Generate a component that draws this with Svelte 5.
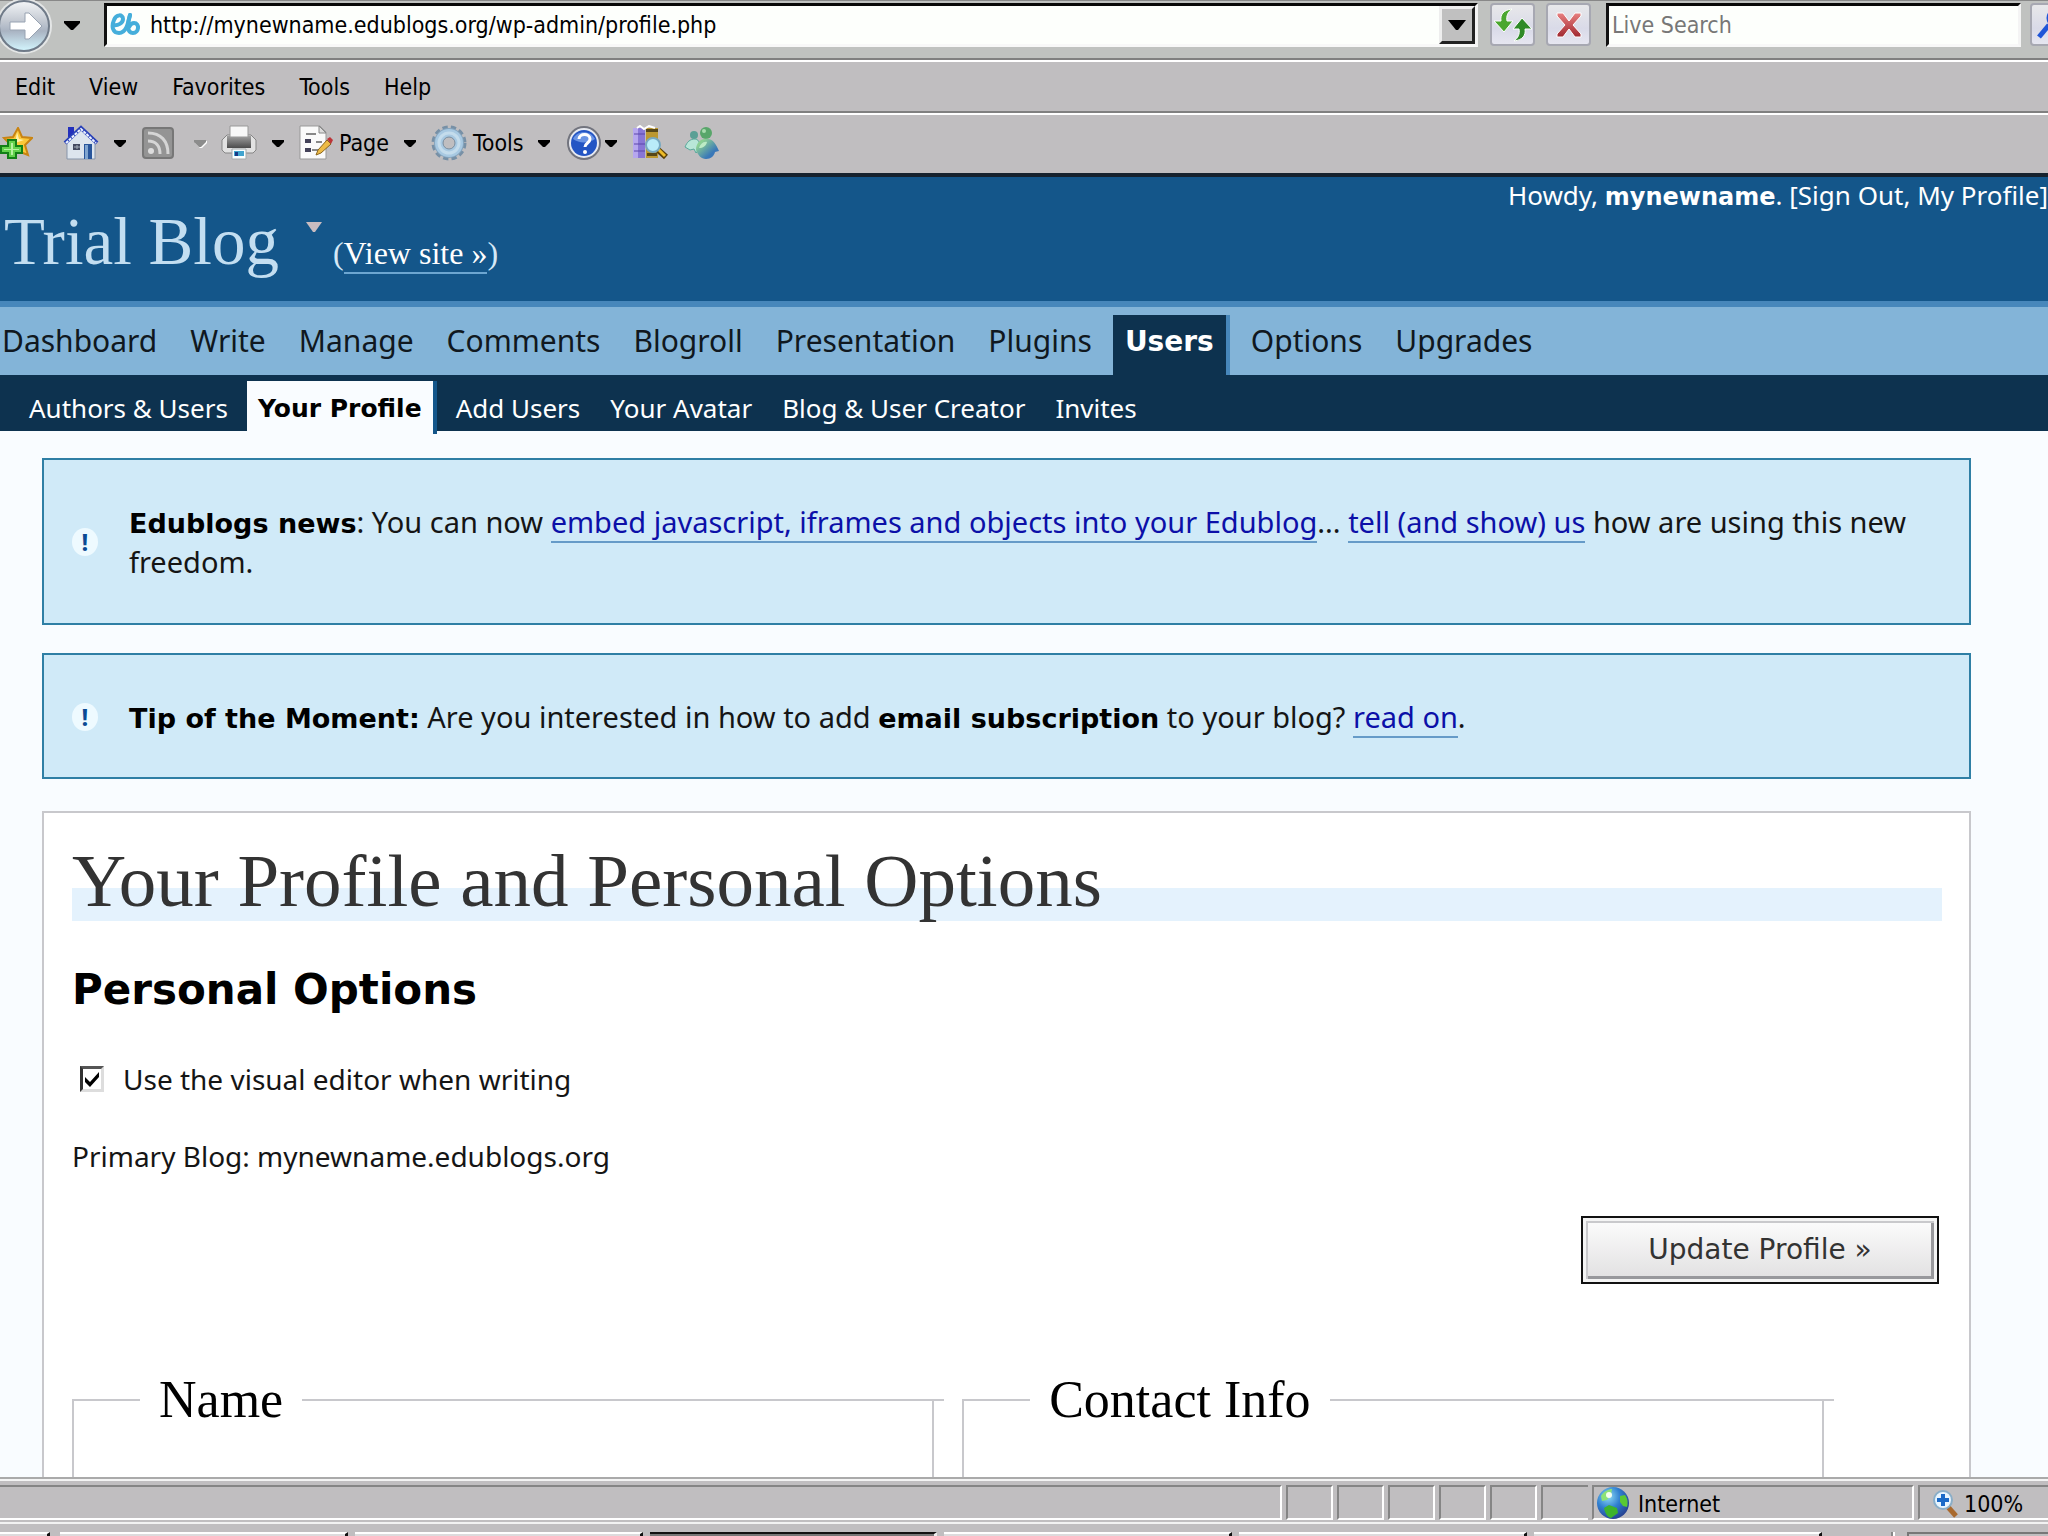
<script>
    const menus = ['Edit', 'View', 'Favorites', 'Tools', 'Help'];
    const sections = ['Dashboard', 'Write', 'Manage', 'Comments', 'Blogroll', 'Presentation', 'Plugins', 'Users', 'Options', 'Upgrades'];
    const pages = ['Authors & Users', 'Your Profile', 'Add Users', 'Your Avatar', 'Blog & User Creator', 'Invites'];
    const statusPanes = [1, 2, 3, 4, 5, 6];
    const tasks = ['first', '', '', 'pressed', '', '', ''];

    let address = $state('http://mynewname.edublogs.org/wp-admin/profile.php');
    let search = $state('');
    let visualEditor = $state(true);
</script>

{#snippet arrow(faded)}
    <svg class="arrow" class:faded width="12" height="7" viewBox="0 0 12 7" aria-hidden="true">
        <path d="M0 0h12v2L7 7H5L0 2z" />
    </svg>
{/snippet}

<div class="browser">
    <div class="address-row">
        <button class="forward" aria-label="Forward">
            <svg width="56" height="56" viewBox="0 0 56 56">
                <defs>
                    <linearGradient id="glass" x1="0" y1="0" x2="0" y2="1">
                        <stop offset="0" stop-color="#f4f6f8" />
                        <stop offset=".4" stop-color="#c3c9d2" />
                        <stop offset=".6" stop-color="#a9b3c2" />
                        <stop offset="1" stop-color="#d4f7ff" />
                    </linearGradient>
                </defs>
                <circle cx="24" cy="28" r="28" fill="#e4e6e6" />
                <circle cx="24" cy="28" r="25" fill="url(#glass)" stroke="#6f7a88" stroke-width="2" />
                <path d="M10 24h15v-9h4l13 13-13 13h-4v-9H10z" fill="#fff" stroke="#98a3b2" stroke-width="1" />
            </svg>
        </button>
        <button class="plain history" aria-label="Recent pages">
            <svg width="16" height="9" viewBox="0 0 16 9"><path d="M0 0h16v2L9 9H7L0 2z" /></svg>
        </button>
        <div class="sunken address">
            <svg width="32" height="28" viewBox="0 0 32 28" fill="none" stroke="#45aedb" stroke-width="4" stroke-linecap="round">
                <path d="M3 14c5 1 10-2 10-6 0-5-7-5-9 1-3 7-1 13 5 13 7 0 9-9 11-18" />
                <path d="M20 4c-3 10-3 18 3 18s7-10 1-10c-3 0-4 2-5 4" />
            </svg>
            <input aria-label="Address" bind:value={address} />
            <button class="drop" aria-label="Show addresses">
                <svg width="18" height="10" viewBox="0 0 18 10"><path d="M0 0h18L10 10H8z" /></svg>
            </button>
        </div>
        <button class="tool" aria-label="Refresh">
            <svg width="38" height="34" viewBox="0 0 38 34">
                <path d="M18 1C9 2 6 7 7 13H0l10 11 9-11h-6c-1-5 1-9 5-12z" fill="#4ba72f" stroke="#fff" stroke-width="1" />
                <path d="M20 33c9-1 12-6 11-12h7L28 10l-9 11h6c1 5-1 9-5 12z" fill="#2f8a26" stroke="#fff" stroke-width="1" />
            </svg>
        </button>
        <button class="tool stop" aria-label="Stop">
            <svg width="30" height="28" viewBox="0 0 30 28">
                <defs>
                    <linearGradient id="stop" x1="0" y1="0" x2="0" y2="1">
                        <stop offset="0" stop-color="#e88080" />
                        <stop offset="1" stop-color="#a02830" />
                    </linearGradient>
                </defs>
                <path d="M3 2h6l6 8 6-8h6v3l-8 9 8 9v3h-6l-6-8-6 8H3v-3l8-9-8-9z" fill="url(#stop)" stroke="#fff" stroke-width="1" />
            </svg>
        </button>
        <input class="sunken search" aria-label="Search" placeholder="Live Search" bind:value={search} />
        <button class="tool go" aria-label="Search">
            <svg width="32" height="32" viewBox="0 0 32 32" fill="none" stroke="#1f55d8" stroke-width="5">
                <path d="M2 28l10-12" />
                <circle cx="19" cy="9" r="8" stroke-width="3" />
            </svg>
        </button>
    </div>

    <div class="menu-row">
        {#each menus as menu}
            <button class="plain">{menu}</button>
        {/each}
    </div>

    <div class="command-row">
        <button class="plain star" aria-label="Add to favorites">
            <svg width="33" height="32" viewBox="0 0 33 32">
                <path d="M18 1l4 9 10 1-7 7 3 10-10-4-10 4 2-11-6-6 9-1z" fill="#fbc83a" stroke="#c98412" stroke-width="2" />
                <path d="M17 5l2 7 5 1-9 3z" fill="#fff0a8" />
                <path d="M8 13h8v6h6v7h-6v5H8v-5H1v-7h7z" fill="#63d24d" stroke="#138017" stroke-width="2" />
                <path d="M11 16h2v6h6v1h-6v5h-2v-5H4v-1h7z" fill="#b5f2a0" />
            </svg>
        </button>
        <button class="plain home" aria-label="Home">
            <svg width="36" height="36" viewBox="0 0 36 36">
                <path d="M5 2h6v10H5z" fill="#2330bc" />
                <path d="M4 17L18 4l14 13v17H4z" fill="#dde5ee" stroke="#8795aa" stroke-width="1" />
                <path d="M21 19h8v15h-8z" fill="#28559b" />
                <path d="M22 20h3v14h-3z" fill="#80a5d0" />
                <path d="M10 19h7v6h-7z" fill="#444a60" />
                <path d="M14 20v4M11 22h6" stroke="#a6afba" />
                <path d="M2 18L18 3l16 15" fill="none" stroke="#2941b8" stroke-width="4" />
                <path d="M3 18L18 4l15 14" fill="none" stroke="#eef4ff" stroke-width="2" stroke-dasharray="3 1" />
            </svg>
        </button>
        <button class="plain menu-arrow" aria-label="Home menu">{@render arrow(false)}</button>
        <button class="plain feed" aria-label="Feeds">
            <svg width="32" height="32" viewBox="0 0 32 32">
                <rect x="1" y="1" width="30" height="30" rx="3" fill="#949494" stroke="#777" stroke-width="2" />
                <circle cx="9" cy="24" r="3" fill="#ddd" />
                <path d="M6 14c8 0 12 5 12 13M6 6c13 0 20 8 20 21" fill="none" stroke="#d5d5d5" stroke-width="3" />
            </svg>
        </button>
        <button class="plain feed-arrow" aria-label="Feeds menu">{@render arrow(true)}</button>
        <button class="plain printer" aria-label="Print">
            <svg width="36" height="36" viewBox="0 0 36 36">
                <defs>
                    <linearGradient id="tray" x1="0" y1="0" x2="0" y2="1">
                        <stop offset="0" stop-color="#a0a0a0" />
                        <stop offset="1" stop-color="#4c4c4c" />
                    </linearGradient>
                </defs>
                <path d="M1 15l5-5h24l5 5v10l-3 3H4l-3-3z" fill="#e2e2e2" stroke="#858585" />
                <path d="M6 11h24v12H6z" fill="url(#tray)" />
                <path d="M9 1h18v11H9z" fill="#f8f8f8" stroke="#999" />
                <path d="M11 24h14v10H11z" fill="#f9ffff" stroke="#a5aaac" />
                <path d="M13 26h10v5H13z" fill="#40a4cf" />
                <path d="M14 27h3v4h-3z" fill="#183b87" />
            </svg>
        </button>
        <button class="plain menu-arrow" aria-label="Print menu">{@render arrow(false)}</button>
        <button class="plain page-menu">
            <svg width="36" height="36" viewBox="0 0 36 36">
                <path d="M2 1h20l6 6v27H2z" fill="#fafafa" stroke="#999" />
                <path d="M21 1v7h7z" fill="#ddd" stroke="#888" />
                <path d="M8 9h10M18 17h6M14 25h8" stroke="#888" stroke-width="2" />
                <path d="M7 14h6v4H7zM7 23h6v4H7z" fill="#434158" />
                <path d="M18 30l2-5 9-10 4 4-10 9z" fill="#eebb45" stroke="#8a651d" />
                <path d="M29 14l3-2 3 3-2 4z" fill="#bc3438" />
            </svg>
            <span>Page</span>
            {@render arrow(false)}
        </button>
        <button class="plain tools-menu">
            <svg width="36" height="36" viewBox="0 0 36 36">
                <circle cx="18" cy="18" r="15" fill="none" stroke="#7790a6" stroke-width="5" stroke-dasharray="5 3" />
                <circle cx="18" cy="18" r="10" fill="none" stroke="#86a5be" stroke-width="10" />
                <circle cx="18" cy="18" r="10" fill="none" stroke="#a8c9e2" stroke-width="8" />
                <circle cx="18" cy="18" r="10" fill="none" stroke="#c4dcec" stroke-width="3" />
                <circle cx="18" cy="18" r="6" fill="#c0bec0" stroke="#7c8fa0" />
            </svg>
            <span>Tools</span>
            {@render arrow(false)}
        </button>
        <button class="plain help" aria-label="Help">
            <svg width="36" height="36" viewBox="0 0 36 36">
                <circle cx="18" cy="18" r="16" fill="#e7eaf1" stroke="#72747e" stroke-width="2" />
                <circle cx="18" cy="18" r="13" fill="#2355c4" />
                <path d="M7 14c3-8 17-10 22 0-6 4-15 5-22 0z" fill="#6a94e4" />
                <path d="M13 14c0-6 11-6 11 0 0 4-5 4-5 8" fill="none" stroke="#fff" stroke-width="3" />
                <circle cx="19" cy="27" r="2" fill="#fff" />
            </svg>
            {@render arrow(false)}
        </button>
        <button class="plain research" aria-label="Research">
            <svg width="36" height="36" viewBox="0 0 36 36">
                <path d="M1 3h12v30H1z" fill="#8876d6" />
                <path d="M1 3h5v30H1z" fill="#b6a7ee" />
                <path d="M2 9h11M2 19h11M2 26h11" stroke="#5b47ab" stroke-width="1" />
                <path d="M14 3h12v30H14z" fill="#bc9831" />
                <path d="M14 4h12v3H14zM15 28h10v3H15z" fill="#564719" />
                <path d="M5 3l3-2 4 3 5-3 6 2" stroke="#fff" stroke-width="2" fill="none" />
                <path d="M25 24l9 8" stroke="#5b4106" stroke-width="6" />
                <path d="M26 24l7 7" stroke="#eebb27" stroke-width="3" />
                <circle cx="21" cy="20" r="7" fill="#b9ecf9" stroke="#77a9c1" stroke-width="2" />
            </svg>
        </button>
        <button class="plain messenger" aria-label="Messenger">
            <svg width="36" height="36" viewBox="0 0 36 36">
                <defs>
                    <linearGradient id="buddy" x1="0" y1="0" x2="1" y2="1">
                        <stop offset=".2" stop-color="#8bcf93" />
                        <stop offset=".7" stop-color="#3a78b8" />
                    </linearGradient>
                </defs>
                <circle cx="10" cy="10" r="4" fill="#5a9f95" />
                <path d="M1 22c2-5 5-8 10-8 3 0 5 3 5 9l-4 5-2-4-4 1z" fill="#b8e6d8" stroke="#59a79a" />
                <circle cx="22" cy="8" r="6" fill="#58a66a" />
                <circle cx="20" cy="6" r="2" fill="#a8dcae" />
                <path d="M12 25c0-7 5-12 12-11 5 0 8 5 11 12l-4 1c-1 4-4 7-9 7s-8-4-10-9z" fill="url(#buddy)" />
                <path d="M15 23c1-3 4-7 8-6-1 4-4 6-8 6z" fill="#bdebc5" />
            </svg>
        </button>
    </div>

    <div class="viewport">
        <header>
            <div class="title">
                <h1>Trial Blog</h1>
                <svg width="16" height="10" viewBox="0 0 16 10" aria-hidden="true"><path d="M0 0h16L9 10H7z" fill="#c9bcc0" /></svg>
                <span class="view-site">(<a href="#site">View site »</a>)</span>
            </div>
            <p class="howdy">Howdy, <strong>mynewname</strong>. [<a href="#signout">Sign Out</a>, <a href="#profile">My Profile</a>]</p>
        </header>

        <nav class="sections">
            {#each sections as section}
                <a href="#{section}" class:current={section === 'Users'}>{section}</a>
            {/each}
        </nav>
        <nav class="pages">
            {#each pages as page}
                <a href="#{page}" class:current={page === 'Your Profile'}>{page}</a>
            {/each}
        </nav>

        <main>
            <div class="notice">
                <span class="mark">!</span>
                <p>
                    <strong>Edublogs news</strong>: You can now <a href="#embed">embed javascript, iframes and objects into your Edublog</a>...
                    <a href="#tell">tell (and show) us</a> how are using this new freedom.
                </p>
            </div>
            <div class="notice tip">
                <span class="mark">!</span>
                <p>
                    <strong>Tip of the Moment:</strong> Are you interested in how to add <strong>email subscription</strong> to your blog?
                    <a href="#readon">read on</a>.
                </p>
            </div>

            <form class="wrap" onsubmit={(e) => e.preventDefault()}>
                <h2>Your Profile and Personal Options</h2>
                <h3>Personal Options</h3>
                <label class="editor">
                    <input type="checkbox" bind:checked={visualEditor} />
                    Use the visual editor when writing
                </label>
                <p class="primary">Primary Blog: mynewname.edublogs.org</p>
                <div class="submit">
                    <button>Update Profile »</button>
                </div>
                <div class="fieldsets">
                    <fieldset><legend>Name</legend></fieldset>
                    <fieldset><legend>Contact Info</legend></fieldset>
                </div>
            </form>
        </main>
    </div>

    <div class="status">
        <div class="pane message"></div>
        {#each statusPanes as pane}
            <div class="pane small"></div>
        {/each}
        <div class="pane zone">
            <svg width="33" height="33" viewBox="0 0 33 33">
                <defs>
                    <radialGradient id="globe" cx=".35" cy=".3" r=".75">
                        <stop offset="0" stop-color="#8fdcf4" />
                        <stop offset=".5" stop-color="#2f7fd0" />
                        <stop offset="1" stop-color="#263f8f" />
                    </radialGradient>
                </defs>
                <circle cx="16" cy="16" r="16" fill="url(#globe)" />
                <path d="M4 9c3-5 8-7 11-7l-1 6-4 5-5 1z" fill="#8de276" />
                <path d="M23 9l5-1c3 4 3 8 2 12l-4-1-3-4z" fill="#58c935" />
                <path d="M7 21l5-3 8 3 1 5-7 5c-4-1-6-5-7-10z" fill="#3db32d" />
                <circle cx="12" cy="8" r="3" fill="#f4fff0" />
            </svg>
            <span>Internet</span>
        </div>
        <div class="pane zoom">
            <svg width="26" height="28" viewBox="0 0 26 28">
                <path d="M16 17l8 9" stroke="#a9692d" stroke-width="5" />
                <circle cx="11" cy="10" r="9" fill="#e8f5ff" stroke="#8aaec8" stroke-width="2" />
                <path d="M11 4v12M5 10h12" stroke="#1b6ac8" stroke-width="4" />
            </svg>
            <span>100%</span>
        </div>
    </div>
    <div class="taskbar">
        {#each tasks as kind}
            <div class="task {kind}"></div>
        {/each}
        <div class="grip"></div>
        <div class="tray"></div>
    </div>
</div>

<style>
    :global(body) {
        margin: 0;
        overflow: hidden;
    }

    .browser {
        height: 100vh;
        display: flex;
        flex-direction: column;
        overflow: hidden;
        background: #c0bec0;
        color: #000;
        font: 23px/30px "DejaVu Sans Condensed", "DejaVu Sans", sans-serif;
    }

    button, input {
        font: inherit;
        color: inherit;
        box-sizing: border-box;
    }

    svg {
        display: block;
        flex: none;
    }

    h1, h2, h3, p {
        margin: 0;
        font-weight: normal;
    }

    strong {
        font-family: "DejaVu Sans", sans-serif;
        line-height: 1;
    }

    .plain, .forward {
        display: flex;
        align-items: center;
        padding: 0;
        border: 0;
        background: none;
    }

    /* address bar */
    .address-row {
        display: flex;
        flex: none;
        height: 58px;
        box-sizing: border-box;
        padding-top: 2px;
        align-items: flex-start;
        background: #c0c2c0;
        border-top: 1px solid #888;
    }

    .forward {
        width: 56px;
        height: 46px;
    }

    .history {
        width: 32px;
        height: 44px;
        padding-left: 8px;
    }

    .sunken {
        height: 44px;
        border: 3px solid;
        border-color: #080808 #f4f4f4 #f8f8f8 #111;
        background: #fdfffc;
    }

    .address {
        display: flex;
        flex: 1;
        align-items: center;
        box-sizing: border-box;
        margin-left: 16px;
        padding-left: 3px;
    }

    .address input {
        flex: 1;
        min-width: 0;
        height: 38px;
        margin-left: 8px;
        padding: 0;
        border: 0;
        outline: 0;
        background: none;
    }

    .drop {
        display: flex;
        align-items: center;
        justify-content: center;
        width: 36px;
        height: 38px;
        padding: 0;
        border: 3px solid;
        border-color: #eee #222 #222 #eee;
        background: #c0c0c0;
    }

    .tool {
        display: flex;
        flex: none;
        align-items: center;
        justify-content: center;
        width: 45px;
        height: 43px;
        margin-left: 12px;
        padding: 0;
        border: 2px solid #a7a8b2;
        border-radius: 4px;
        background: linear-gradient(#e8e8ea, #d9dae8 60%, #e6e6f0);
    }

    .stop {
        margin-left: 11px;
    }

    .search {
        width: 415px;
        margin-left: 15px;
        padding: 0 3px;
        border-radius: 0;
        outline: 0;
    }

    .search::placeholder {
        color: #777;
        opacity: 1;
    }

    .go {
        margin: 0 -27px 0 9px;
    }

    /* menus */
    .menu-row {
        display: flex;
        flex: none;
        gap: 34px;
        height: 53px;
        box-sizing: border-box;
        padding: 3px 0 0 15px;
        border-top: 2px solid #808080;
        box-shadow: inset 0 2px #fff;
    }

    .command-row {
        display: flex;
        flex: none;
        align-items: center;
        height: 66px;
        box-sizing: border-box;
        border-top: 2px solid #808080;
        border-bottom: 4px solid #16222e;
        box-shadow: inset 0 2px #fff;
    }

    .arrow.faded {
        fill: #8c8c8c;
        filter: drop-shadow(1px 1px #fff);
    }

    .home { margin-left: 30px; }
    .menu-arrow { margin-left: 15px; }
    .feed { margin-left: 16px; }
    .feed-arrow { margin-left: 20px; }
    .printer { margin-left: 15px; }
    .page-menu { margin-left: 14px; }
    .page-menu span { margin: 0 15px 0 5px; }
    .tools-menu { margin-left: 15px; }
    .tools-menu span { margin: 0 14px 0 6px; }
    .help { margin-left: 16px; gap: 3px; }
    .research { margin-left: 15px; }
    .messenger { margin-left: 16px; }

    /* page */
    .viewport {
        flex: 1;
        min-height: 0;
        overflow: hidden;
        background: #f9fcff;
        font: 28px/40px "Noto Sans", sans-serif;
    }

    header {
        display: flex;
        justify-content: space-between;
        height: 124px;
        background: #14568a;
        border-bottom: 6px solid #4787bb;
        color: #fff;
    }

    header a, nav a {
        color: inherit;
        text-decoration: none;
    }

    .title {
        display: flex;
        align-items: baseline;
        padding: 24px 0 0 4px;
        font-family: "Liberation Serif", serif;
        line-height: 80px;
    }

    h1 {
        font-size: 67px;
        color: #c3def1;
    }

    .title svg {
        align-self: flex-start;
        margin: 21px 11px 0 27px;
    }

    .view-site {
        font-size: 32px;
        color: #d5e8f7;
    }

    .view-site a {
        color: #fff;
        padding-bottom: 1px;
        border-bottom: 2px solid #6da6d1;
    }

    .howdy {
        flex: none;
        font-size: 26px;
        line-height: 36px;
    }

    .howdy strong {
        font-size: 24px;
    }

    nav {
        display: flex;
    }

    .sections {
        gap: 9px;
        padding-top: 8px;
        background: #83b4d8;
        color: #101820;
        font-size: 30px;
        line-height: 52px;
    }

    .sections a {
        height: 60px;
        padding: 0 12px;
    }

    .sections a:first-child {
        padding-left: 2px;
    }

    .sections .current {
        border-right: 4px solid #4787bb;
        background: #0d324f;
        color: #fff;
        font-family: "DejaVu Sans", sans-serif;
        font-size: 28px;
        font-weight: bold;
        line-height: 54px;
    }

    .pages {
        gap: 8px;
        height: 56px;
        box-sizing: border-box;
        padding: 6px 0 0 18px;
        background: #0d324f;
        color: #fff;
        font-size: 26px;
    }

    .pages a {
        height: 53px;
        padding: 0 11px;
        line-height: 54px;
    }

    .pages .current {
        border-right: 4px solid #14568a;
        background: #f9fcff;
        color: #000;
        font-family: "DejaVu Sans", sans-serif;
        font-size: 25px;
        font-weight: bold;
        line-height: 56px;
    }

    main {
        padding: 27px 77px 0 42px;
        color: #151515;
    }

    .notice {
        display: flex;
        align-items: center;
        gap: 31px;
        margin-bottom: 28px;
        padding: 42px 28px 41px;
        border: 2px solid #2f7fa5;
        background: #d0eaf8;
        font-size: 29px;
    }

    .tip {
        margin-bottom: 32px;
        padding-bottom: 40px;
    }

    .notice strong {
        color: #000;
        font-size: 27px;
    }

    .notice a {
        color: #0c10a8;
        text-decoration: none;
        border-bottom: 2px solid #669bc8;
    }

    .mark {
        flex: none;
        width: 26px;
        height: 28px;
        border-radius: 50%;
        background: #eefaff;
        color: #0a4a94;
        font: bold 24px/28px "Noto Sans", sans-serif;
        text-align: center;
    }

    .wrap {
        padding: 28px 27px 0 28px;
        border: 2px solid #c8c8cc;
        background: #fff;
    }

    h2 {
        background: linear-gradient(#e4f2fd, #e4f2fd) bottom / 100% 33px no-repeat;
        color: #333;
        font: 75px/80px "Liberation Serif", serif;
    }

    h3 {
        margin: 39px 0;
        color: #000;
        font-family: "DejaVu Sans", sans-serif;
        font-size: 42px;
        font-weight: bold;
        line-height: 60px;
    }

    .editor {
        display: flex;
        align-items: center;
    }

    .editor input {
        appearance: none;
        width: 24px;
        height: 26px;
        margin: 0 19px 0 8px;
        border: 3px solid;
        border-color: #555 #ddd #ddd #333;
        background: #fff;
    }

    .editor input:checked {
        background: #fff url("data:image/svg+xml,%3Csvg xmlns='http://www.w3.org/2000/svg' viewBox='0 0 18 20'%3E%3Cpath d='M2 8l5 5 9-10v5l-9 10-5-5z'/%3E%3C/svg%3E") center / 18px 20px no-repeat;
    }

    .primary {
        margin: 37px 0 40px;
    }

    .submit {
        display: flex;
        justify-content: flex-end;
        padding-right: 3px;
    }

    .submit button {
        width: 358px;
        height: 68px;
        border: 2px solid #111;
        background: linear-gradient(#fdfdfd, #e0dfe0);
        box-shadow: inset 0 0 0 3px #f4f4f4, inset 5px 5px #c9c9cc, inset -6px -6px #98989c;
        color: #333;
        font-family: "DejaVu Sans", sans-serif;
        font-size: 28px;
    }

    .fieldsets {
        display: flex;
        gap: 28px;
        margin-top: 86px;
    }

    fieldset {
        position: relative;
        width: calc(46% + 2px);
        min-width: 0;
        height: 200px;
        box-sizing: border-box;
        margin: 0;
        padding: 0;
        border: 2px solid #c8c8cc;
    }

    /* top rule runs on past the corner */
    fieldset::after {
        content: "";
        position: absolute;
        top: -31px;
        right: -12px;
        width: 12px;
        height: 2px;
        background: #c8c8cc;
    }

    legend {
        margin-left: 66px;
        padding: 0 19px;
        color: #000;
        font: 52px/60px "Liberation Serif", serif;
    }

    /* status bar */
    .status {
        display: flex;
        flex: none;
        gap: 4px;
        height: 47px;
        box-sizing: border-box;
        padding: 6px 0 2px;
        border-top: 2px solid #aaa;
        border-bottom: 2px solid #f2f2f2;
        box-shadow: inset 0 2px #f4f4f4;
    }

    .pane {
        display: flex;
        align-items: center;
        box-sizing: border-box;
        border: 2px solid;
        border-color: #858585 #fff #fff #858585;
    }

    .message { flex: 1; border-left: 0; }
    .small { width: 47px; }
    .small:nth-child(7) { border-right: 0; }
    .zone { width: 322px; padding: 2px 0 0 3px; gap: 8px; }
    .zoom { width: 130px; padding: 2px 0 0 12px; gap: 6px; border-right: 0; }

    .taskbar {
        display: flex;
        flex: none;
        height: 12px;
        box-sizing: border-box;
        padding-top: 8px;
    }

    .task {
        flex: 1;
        margin-right: 7px;
        border-top: 2px solid #fff;
        border-right: 3px solid #111;
        background: #dddbdd;
    }

    .first { flex: none; width: 47px; margin-right: 10px; }
    .pressed { border-top-color: #111; border-right-color: #eee; background: #777; }
    .grip { width: 2px; margin: 0 12px 0 62px; border-left: 2px solid #888; background: #fff; }
    .tray { width: 139px; border-top: 2px solid #777; border-left: 2px solid #777; }
</style>
